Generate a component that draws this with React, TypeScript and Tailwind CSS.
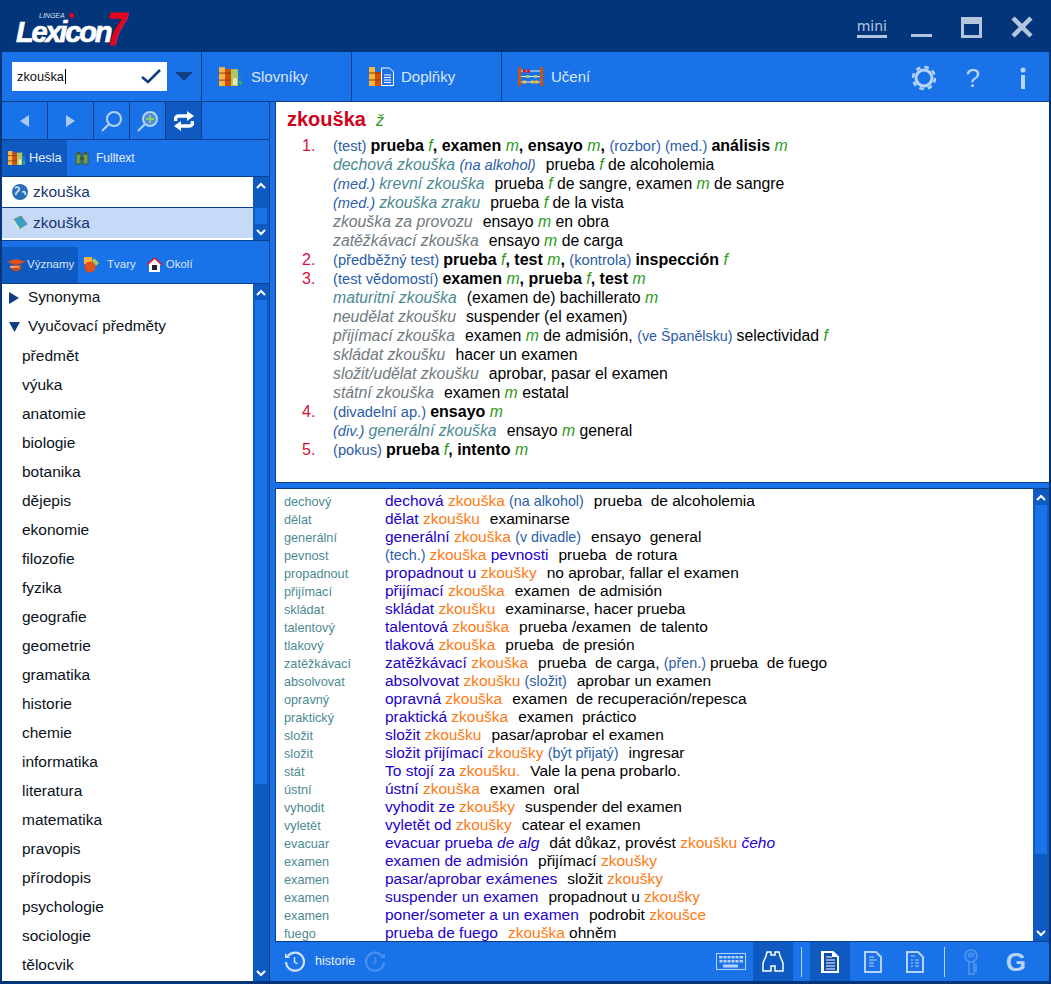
import React from "react";

const S: Record<string, string> = {
  p: "text-[#2a5da8] text-[14.7px]",
  q: "text-[#2a5da8] text-[14.3px]",
  pi: "text-[#2a5da8] text-[14.6px] italic",
  t: "text-black",
  T: "text-black ml-[10px]",
  b: "text-black font-bold text-[16px]",
  g: "text-[#2e9a18] italic",
  e: "text-[#4b8a92] italic",
  h: "text-[#6f7a80] italic",
  u: "text-[#2200cc]",
  o: "text-[#ff7a10]",
  i: "text-[#2200cc] italic",
};
type Seg = [string, string];

const dict: { n?: string; s: Seg[] }[] = [
  { n: "1.", s: [["p", "(test) "], ["b", "prueba "], ["g", "f"], ["b", ", examen "], ["g", "m"], ["b", ", ensayo "], ["g", "m"], ["b", ", "], ["p", "(rozbor) (med.) "], ["b", "análisis "], ["g", "m"]] },
  { s: [["e", "dechová zkouška "], ["pi", "(na alkohol)"], ["T", "prueba "], ["g", "f"], ["t", " de alcoholemia"]] },
  { s: [["pi", "(med.) "], ["e", "krevní zkouška"], ["T", "prueba "], ["g", "f"], ["t", " de sangre, examen "], ["g", "m"], ["t", " de sangre"]] },
  { s: [["pi", "(med.) "], ["e", "zkouška zraku"], ["T", "prueba "], ["g", "f"], ["t", " de la vista"]] },
  { s: [["h", "zkouška za provozu"], ["T", "ensayo "], ["g", "m"], ["t", " en obra"]] },
  { s: [["h", "zatěžkávací zkouška"], ["T", "ensayo "], ["g", "m"], ["t", " de carga"]] },
  { n: "2.", s: [["p", "(předběžný test) "], ["b", "prueba "], ["g", "f"], ["b", ", test "], ["g", "m"], ["b", ", "], ["p", "(kontrola) "], ["b", "inspección "], ["g", "f"]] },
  { n: "3.", s: [["p", "(test vědomostí) "], ["b", "examen "], ["g", "m"], ["b", ", prueba "], ["g", "f"], ["b", ", test "], ["g", "m"]] },
  { s: [["e", "maturitní zkouška"], ["T", "(examen de) bachillerato "], ["g", "m"]] },
  { s: [["h", "neudělat zkoušku"], ["T", "suspender (el examen)"]] },
  { s: [["h", "přijímací zkouška"], ["T", "examen "], ["g", "m"], ["t", " de admisión, "], ["q", "(ve Španělsku) "], ["t", "selectividad "], ["g", "f"]] },
  { s: [["h", "skládat zkoušku"], ["T", "hacer un examen"]] },
  { s: [["h", "složit/udělat zkoušku"], ["T", "aprobar, pasar el examen"]] },
  { s: [["h", "státní zkouška"], ["T", "examen "], ["g", "m"], ["t", " estatal"]] },
  { n: "4.", s: [["p", "(divadelní ap.) "], ["b", "ensayo "], ["g", "m"]] },
  { s: [["pi", "(div.) "], ["e", "generální zkouška"], ["T", "ensayo "], ["g", "m"], ["t", " general"]] },
  { n: "5.", s: [["p", "(pokus) "], ["b", "prueba "], ["g", "f"], ["b", ", intento "], ["g", "m"]] },
];

const rows: [string, Seg[]][] = [
  ["dechový", [["u", "dechová "], ["o", "zkouška "], ["q", "(na alkohol)"], ["T", "prueba  de alcoholemia"]]],
  ["dělat", [["u", "dělat "], ["o", "zkoušku"], ["T", "examinarse"]]],
  ["generální", [["u", "generální "], ["o", "zkouška "], ["q", "(v divadle)"], ["T", "ensayo  general"]]],
  ["pevnost", [["q", "(tech.) "], ["o", "zkouška "], ["u", "pevnosti"], ["T", "prueba  de rotura"]]],
  ["propadnout", [["u", "propadnout u "], ["o", "zkoušky"], ["T", "no aprobar, fallar el examen"]]],
  ["přijímací", [["u", "přijímací "], ["o", "zkouška"], ["T", "examen  de admisión"]]],
  ["skládat", [["u", "skládat "], ["o", "zkoušku"], ["T", "examinarse, hacer prueba"]]],
  ["talentový", [["u", "talentová "], ["o", "zkouška"], ["T", "prueba /examen  de talento"]]],
  ["tlakový", [["u", "tlaková "], ["o", "zkouška"], ["T", "prueba  de presión"]]],
  ["zatěžkávací", [["u", "zatěžkávací "], ["o", "zkouška"], ["T", "prueba  de carga, "], ["q", "(přen.) "], ["t", "prueba  de fuego"]]],
  ["absolvovat", [["u", "absolvovat "], ["o", "zkoušku "], ["q", "(složit)"], ["T", "aprobar un examen"]]],
  ["opravný", [["u", "opravná "], ["o", "zkouška"], ["T", "examen  de recuperación/repesca"]]],
  ["praktický", [["u", "praktická "], ["o", "zkouška"], ["T", "examen  práctico"]]],
  ["složit", [["u", "složit "], ["o", "zkoušku"], ["T", "pasar/aprobar el examen"]]],
  ["složit", [["u", "složit přijímací "], ["o", "zkoušky "], ["q", "(být přijatý)"], ["T", "ingresar"]]],
  ["stát", [["u", "To stojí za "], ["o", "zkoušku."], ["T", "Vale la pena probarlo."]]],
  ["ústní", [["u", "ústní "], ["o", "zkouška"], ["T", "examen  oral"]]],
  ["vyhodit", [["u", "vyhodit ze "], ["o", "zkoušky"], ["T", "suspender del examen"]]],
  ["vyletět", [["u", "vyletět od "], ["o", "zkoušky"], ["T", "catear el examen"]]],
  ["evacuar", [["u", "evacuar prueba "], ["i", "de alg"], ["T", "dát důkaz, provést "], ["o", "zkoušku "], ["i", "čeho"]]],
  ["examen", [["u", "examen de admisión"], ["T", "přijímací "], ["o", "zkoušky"]]],
  ["examen", [["u", "pasar/aprobar exámenes"], ["T", "složit "], ["o", "zkoušky"]]],
  ["examen", [["u", "suspender un examen"], ["T", "propadnout u "], ["o", "zkoušky"]]],
  ["examen", [["u", "poner/someter a un examen"], ["T", "podrobit "], ["o", "zkoušce"]]],
  ["fuego", [["u", "prueba de fuego"], ["T", ""], ["o", "zkouška "], ["t", "ohněm"]]],
];

const subjects = ["předmět", "výuka", "anatomie", "biologie", "botanika", "dějepis", "ekonomie", "filozofie", "fyzika", "geografie", "geometrie", "gramatika", "historie", "chemie", "informatika", "literatura", "matematika", "pravopis", "přírodopis", "psychologie", "sociologie", "tělocvik"];

const Segs = ({ s }: { s: Seg[] }) => (
  <>
    {s.map(([k, t], i) => (
      <span key={i} className={`${S[k]} whitespace-pre`}>{t}</span>
    ))}
  </>
);

const Books = ({ w = 24 }: { w?: number }) => (
  <svg width={w} height={w * 0.8} viewBox="0 0 24 19" className="shrink-0">
    <rect x="0" y="0" width="6" height="19" fill="#ffb340" />
    <rect x="6" y="2" width="6" height="17" fill="#d0500c" />
    <path d="M0 6h12M0 13h12" stroke="#8a3a08" strokeWidth="1" />
    <rect x="12" y="2" width="7" height="17" fill="#a8c860" />
    <rect x="14" y="11" width="4" height="7" fill="#e0e8b8" />
    <rect x="20" y="7" width="3" height="12" fill="#1f7ad0" />
    <rect x="20" y="14" width="3" height="3" fill="#30b060" />
  </svg>
);

const Chevron = ({ up }: { up?: boolean }) => (
  <svg width="10" height="7" viewBox="0 0 10 7">
    <path d={up ? "M1 6l4-4 4 4" : "M1 1l4 4 4-4"} fill="none" stroke="#fff" strokeWidth="2" />
  </svg>
);

const Scroll = ({ thumbTop, thumbH }: { thumbTop: number; thumbH: number }) => (
  <div className="w-4 shrink-0 bg-[#0f5ac0] flex flex-col items-center">
    <div className="h-4 shrink-0 flex items-center justify-center"><Chevron up /></div>
    <div className="flex-1 w-3 flex flex-col">
      <div className="w-3 shrink-0" style={{ height: thumbTop }} />
      <div className="w-3 shrink-0 bg-[#1a72e8]" style={{ height: thumbH }} />
    </div>
    <div className="h-4 shrink-0 flex items-center justify-center"><Chevron /></div>
  </div>
);

const Tri = ({ dir }: { dir: "l" | "r" }) => (
  <svg width="9" height="12" viewBox="0 0 9 12">
    <path d={dir === "l" ? "M9 0v12L0 6z" : "M0 0v12l9-6z"} fill="#a9c8f4" />
  </svg>
);

const Lens = ({ plus }: { plus?: boolean }) => (
  <svg width="22" height="22" viewBox="0 0 22 22" fill="none">
    <circle cx="13" cy="9" r="7" stroke="#b5d2f8" strokeWidth="2" fill={plus ? "#4f8fd8" : "none"} />
    <path d="M8 14l-7 7" stroke="#b5d2f8" strokeWidth="2" />
    {plus && <path d="M13 5v8M9 9h8" stroke="#8ecb6a" strokeWidth="2" />}
  </svg>
);

const Binoc = ({ w = 14 }: { w?: number }) => (
  <svg width={w} height={w} viewBox="0 0 14 14">
    <rect x="1" y="3" width="5" height="10" fill="#6f9a50" stroke="#3a5a3a" />
    <rect x="8" y="3" width="5" height="10" fill="#6f9a50" stroke="#3a5a3a" />
    <rect x="5" y="6" width="4" height="3" fill="#3a5a3a" />
    <rect x="2" y="1" width="3" height="2" fill="#3a5a3a" />
    <rect x="9" y="1" width="3" height="2" fill="#3a5a3a" />
  </svg>
);

const DocIcon = ({ fill, line, dots }: { fill?: boolean; line: string; dots?: boolean }) => (
  <svg width="18" height="22" viewBox="0 0 18 22">
    <path d="M1 1h11l5 5v15H1z" fill={fill ? "#fff" : "#1a72e8"} stroke={fill ? "#fff" : "#b5d2f8"} strokeWidth="2" />
    {fill ? <path d="M3 2h8v4h5v14H3z" fill="#0f4fa8" /> : null}
    {dots ? (
      <path d="M5 5h4M5 9h2M9 9h4M5 12h2M9 12h4M5 15h2M9 15h4" stroke={line} strokeWidth="1" />
    ) : fill ? (
      <path d="M5 6h6M5 9h9M5 12h9M5 15h9M5 18h9" stroke={line} strokeWidth="1" />
    ) : (
      <path d="M5 6h5M5 9h8M5 12h5M5 15h5" stroke={line} strokeWidth="1" />
    )}
  </svg>
);

export default function App() {
  return (
    <div className="w-[1051px] h-[984px] overflow-hidden bg-[#03357a] flex flex-col font-['Liberation_Sans',Arial,sans-serif]">
      {/* title bar */}
      <div className="h-[52px] shrink-0 flex items-start pl-4">
        <div className="flex items-start mt-[12px]">
          <div className="flex flex-col w-[91px] text-white">
            <div className="flex items-center h-[7px] pl-[23px] gap-[4px]">
              <span className="text-[7px] italic leading-[7px] text-[#d4e0f0]">LINGEA</span>
              <span className="w-[5px] h-[5px] rounded-full bg-[#e30520]" />
            </div>
            <span className="text-[29px] leading-[27px] font-bold italic tracking-[-2.2px] whitespace-nowrap [-webkit-text-stroke:0.7px_white]">Lexicon</span>
          </div>
          <span className="text-[47px] leading-[34px] h-[34px] font-bold italic text-[#e30520] scale-x-[0.75] origin-left [-webkit-text-stroke:0.8px_#e30520]">7</span>
        </div>
        <div className="ml-auto flex items-start">
          <span className="mt-[18px] text-[14px] leading-[17px] font-['DejaVu_Sans',sans-serif] text-[#b4c6dd] border-b-[3px] border-[#b4c6dd] mr-[24px]">mini</span>
          <div className="w-[21px] h-[3px] bg-[#b4c6dd] mt-[34px] mr-[29px]" />
          <div className="w-[21px] h-[21px] border-[3px] border-t-[7px] border-[#b4c6dd] mt-[17px] mr-[29px]" />
          <svg width="22" height="22" viewBox="0 0 22 22" className="mt-[16px] mr-[18px]">
            <path d="M2 2l18 18M20 2L2 20" stroke="#b4c6dd" strokeWidth="4.5" />
          </svg>
        </div>
      </div>

      {/* body */}
      <div className="h-[929px] shrink-0 mx-[2px] bg-[#1a72e8] flex flex-col">
        {/* toolbar */}
        <div className="h-[50px] shrink-0 flex border-b border-[#0a3f8c] text-[15px] text-[#dbe8fb]">
          <div className="w-[200px] shrink-0 flex items-center pl-[10px] border-r border-[#0a3f8c]">
            <div className="w-[155px] h-[29px] bg-white flex items-center pl-[5px] pr-[6px] justify-between">
              <span className="text-[12.8px] text-[#111] border-r border-black leading-[15px] pr-[1px]">zkouška</span>
              <svg width="20" height="15" viewBox="0 0 20 15"><path d="M1 8l6 5L19 1" fill="none" stroke="#0f3f80" strokeWidth="2.6" /></svg>
            </div>
            <svg width="18" height="9" viewBox="0 0 18 9" className="ml-2"><path d="M0 0h18L9 9z" fill="#0f3f80" /></svg>
          </div>
          <div className="w-[150px] shrink-0 flex items-center pl-[17px] gap-[8px] border-r border-[#0a3f8c]">
            <Books />
            <span className="pt-[2px]">Slovníky</span>
          </div>
          <div className="w-[150px] shrink-0 flex items-center pl-[17px] gap-[7px] border-r border-[#0a3f8c]">
            <svg width="25" height="19" viewBox="0 0 25 19">
              <rect width="6" height="19" fill="#ffb340" />
              <rect x="6" y="5" width="6" height="14" fill="#d0500c" />
              <path d="M0 6h12M0 13h12" stroke="#8a3a08" />
              <path d="M12.500 1h8l4 4v13.500h-12z" fill="#1a72e8" stroke="#fff" />
              <path d="M15 8h7M15 10.500h7M15 13h7M15 15.500h7" stroke="#fff" />
            </svg>
            <span className="pt-[2px]">Doplňky</span>
          </div>
          <div className="flex items-center pl-[16px] gap-[8px]">
            <svg width="25" height="19" viewBox="0 0 25 19">
              <rect width="3" height="19" fill="#c9560f" />
              <rect x="22" width="3" height="19" fill="#c9560f" />
              <path d="M3 4h19M3 9.500h19M3 15h19" stroke="#e8f0fb" />
              <rect x="5" y="2.500" width="3" height="3" fill="#e01020" />
              <rect x="9" y="2.500" width="3" height="3" fill="#e01020" />
              <rect x="8" y="8" width="3" height="3" fill="#a8c860" />
              <rect x="16" y="8" width="3" height="3" fill="#a8c860" />
              <rect x="5" y="13.500" width="3" height="3" fill="#f2c020" />
              <rect x="13" y="13.500" width="3" height="3" fill="#f2c020" />
              <rect x="17" y="13.500" width="3" height="3" fill="#f2c020" />
            </svg>
            <span className="pt-[2px]">Učení</span>
          </div>
          <div className="ml-auto flex items-center pr-[23px] pt-[2px]">
            <svg width="26" height="26" viewBox="0 0 26 26" className="mr-[29px]">
              <circle cx="13" cy="13" r="8" fill="none" stroke="#b8d4fb" strokeWidth="3" />
              <circle cx="13" cy="13" r="11" fill="none" stroke="#b8d4fb" strokeWidth="2.500" strokeDasharray="4.640 4" />
            </svg>
            <span className="text-[26px] text-[#b8d4fb] leading-none mr-[40px]">?</span>
            <svg width="6" height="22" viewBox="0 0 6 22"><circle cx="3" cy="3" r="2.500" fill="#b8d4fb" /><rect x="1" y="8" width="4" height="14" fill="#b8d4fb" /></svg>
          </div>
        </div>

        <div className="flex-1 flex min-h-0">
          {/* left column */}
          <div className="w-[268px] shrink-0 flex flex-col border-r border-[#0a3f8c]">
            <div className="h-[38px] shrink-0 flex border-b border-[#0a3f8c]">
              <div className="w-[46px] flex items-center justify-center border-r border-[#0a3f8c]"><Tri dir="l" /></div>
              <div className="w-[46px] flex items-center justify-center border-r border-[#0a3f8c]"><Tri dir="r" /></div>
              <div className="w-[36px] flex items-center justify-center border-r border-[#0a3f8c]"><Lens /></div>
              <div className="w-[36px] flex items-center justify-center border-r border-[#0a3f8c]"><Lens plus /></div>
              <div className="w-[36px] flex items-center justify-center border-r border-[#0a3f8c] bg-[#0f5ac0]">
                <svg width="20" height="20" viewBox="0 0 20 20" fill="none" stroke="#fff" strokeWidth="3.500">
                  <path d="M1.500 10V8a3 3 0 0 1 3-3h10M18.500 10v2a3 3 0 0 1-3 3H5" />
                  <path d="M13 0l7 5-7 5zM7 10l-7 5 7 5z" fill="#fff" stroke="none" />
                </svg>
              </div>
            </div>
            <div className="h-[37px] shrink-0 flex border-b border-[#0a3f8c] text-[12px] text-[#e6effc]">
              <div className="w-[65px] flex items-center pl-[6px] gap-[3px] bg-[#0f5ac0]"><Books w={18} /><span className="text-[12.8px]">Hesla</span></div>
              <div className="flex items-center pl-[8px] gap-[7px]"><Binoc /><span>Fulltext</span></div>
            </div>
            <div className="h-[64px] shrink-0 flex border-b border-[#0a3f8c]">
              <div className="flex-1 bg-white flex flex-col text-[15.5px] text-[#17346f]">
                <div className="h-[31px] flex items-center pl-[10px] gap-[5px] border-b border-[#0a3f8c]">
                  <svg width="16" height="16" viewBox="0 0 16 16"><circle cx="8" cy="8" r="8" fill="#2a6fb8" /><path d="M3 4c3-2 5 0 4 2S3 8 4 11M10 8c3-1 4 1 3 3" fill="none" stroke="#cfe0f2" strokeWidth="1.800" /></svg>
                  <span>zkouška</span>
                </div>
                <div className="h-[30px] bg-[#c6daf8] flex items-center pl-[10px] gap-[5px]">
                  <svg width="16" height="16" viewBox="0 0 16 16"><path d="M1 5l8-4 6 8-8 5z" fill="#3aa0c8" stroke="#6a8a80" /><path d="M1 5l6 9" stroke="#dfe8d0" strokeWidth="2" /></svg>
                  <span>zkouška</span>
                </div>
              </div>
              <Scroll thumbTop={15} thumbH={16} />
            </div>
            <div className="h-[6px] shrink-0" />
            <div className="h-[37px] shrink-0 flex border-b border-[#0a3f8c] text-[11.5px] text-[#dbe8fb]">
              <div className="w-[76px] flex items-center pl-[5px] gap-[1px] bg-[#0f5ac0]">
                <svg width="19" height="14" viewBox="0 0 19 14"><path d="M0 4l9-3 10 3-10 3z" fill="#e0501a" /><path d="M4 7h10v4c-3 3-7 3-10 0z" fill="#d04a10" /><path d="M3 9h9" stroke="#fff" /></svg>
                <span>Významy</span>
              </div>
              <div className="flex items-center pl-[6px] gap-[7px]">
                <svg width="16" height="16" viewBox="0 0 16 16"><rect x="0" y="0" width="8" height="7" fill="#ffb340" /><path d="M10 1l5 5-3 3-4-5z" fill="#a8c860" /><circle cx="6" cy="10" r="5.500" fill="#e0501a" /></svg>
                <span>Tvary</span>
              </div>
              <div className="flex items-center pl-[11px] gap-[4px]">
                <svg width="15" height="14" viewBox="0 0 15 14"><path d="M7.500 0L15 7h-2v7H2V7H0z" fill="#fff" /><path d="M0 7l7.500-7L15 7" fill="none" stroke="#e01020" strokeWidth="1.500" /><rect x="5" y="7" width="5" height="5" fill="#223" /></svg>
                <span>Okolí</span>
              </div>
            </div>
            <div className="flex-1 flex min-h-0">
              <div className="flex-1 bg-white text-[15.5px] text-[#0b1220] overflow-hidden">
                <div className="h-[29px] flex items-center pl-[7px] gap-[9px] pb-[2px]">
                  <svg width="10" height="12" viewBox="0 0 10 12"><path d="M0 0v12l10-6z" fill="#0f3f80" /></svg>
                  <span className="text-[15.3px]">Synonyma</span>
                </div>
                <div className="h-[29px] flex items-center pl-[7px] gap-[8px] pb-[2px]">
                  <svg width="11" height="10" viewBox="0 0 11 10"><path d="M0 0h11L5.500 10z" fill="#0f3f80" /></svg>
                  <span className="text-[15.3px]">Vyučovací předměty</span>
                </div>
                {subjects.map((x) => (
                  <div key={x} className="h-[29px] flex items-center pl-[20px] pb-[2px]">{x}</div>
                ))}
              </div>
              <Scroll thumbTop={0} thumbH={484} />
            </div>
          </div>

          {/* right column */}
          <div className="flex-1 min-w-0 flex flex-col pl-[5px]">
            <div className="h-[381px] shrink-0 bg-white border-l border-b border-[#0a3f8c] pl-[11px] pt-[5px] text-[15.8px] leading-[19px]">
              <div className="h-[24px] flex items-baseline">
                <span className="text-[20px] leading-[24px] font-bold text-[#d0001c]">zkouška</span>
                <span className="ml-[10px] text-[16px] italic text-[#2e9a18]">ž</span>
              </div>
              <div className="pt-[5px]">
                {dict.map((d, i) => (
                  <div key={i} className="h-[19px] flex whitespace-nowrap">
                    <span className="w-[46px] pl-[15px] shrink-0 text-[#d0103a] text-[16px]">{d.n}</span>
                    <span><Segs s={d.s} /></span>
                  </div>
                ))}
              </div>
            </div>
            <div className="h-[5px] shrink-0" />
            <div className="h-[454px] shrink-0 flex border-l border-t border-b border-[#0a3f8c]">
              <div className="flex-1 bg-white pt-[3px] overflow-hidden text-[15.5px] leading-[18px]">
                {rows.map(([k, s], i) => (
                  <div key={i} className="h-[18px] flex whitespace-nowrap">
                    <span className="w-[109px] pl-[8px] pt-[1px] shrink-0 text-[12.7px] text-[#4b8a92]">{k}</span>
                    <span><Segs s={s} /></span>
                  </div>
                ))}
              </div>
              <Scroll thumbTop={0} thumbH={349} />
            </div>
            <div className="flex-1 flex items-center pl-[9px]">
              <svg width="21" height="21" viewBox="0 0 21 21" fill="none" stroke="#cfe0f8" strokeWidth="2.200">
                <path d="M4 5a9 9 0 1 1-2 6" /><path d="M1 2v5h5" fill="#cfe0f8" stroke="none" /><path d="M10.500 6v5l3 2" strokeWidth="1.500" />
              </svg>
              <span className="text-[12.5px] text-[#e6effc] ml-[10px]">historie</span>
              <svg width="21" height="21" viewBox="0 0 21 21" fill="none" stroke="#4a8fee" strokeWidth="2.200" className="ml-[10px]">
                <path d="M17 5a9 9 0 1 0 2 6" /><path d="M20 2v5h-5" fill="#4a8fee" stroke="none" /><path d="M10.500 6v5l-3 2" strokeWidth="1.500" />
              </svg>
              <div className="ml-auto flex items-center h-full">
                <svg width="30" height="17" viewBox="0 0 30 17" className="mr-[7px]">
                  <rect x=".5" y=".5" width="29" height="16" fill="none" stroke="#b5d2f8" />
                  <path d="M3 3h24v2.500H3zM3 7h24v2.500H3z" fill="#b5d2f8" />
                  <path d="M3 5v5M7 3v7M11 3v7M15 3v7M19 3v7M23 3v7" stroke="#1a72e8" />
                  <rect x="7" y="11.500" width="15" height="3" fill="#b5d2f8" />
                </svg>
                <div className="w-[40px] h-full bg-[#0f5ac0] flex items-center justify-center">
                  <svg width="24" height="24" viewBox="0 0 24 24" fill="none" stroke="#fff" strokeWidth="1.500"><path d="M6 2h4v3h4V2h4l1 4 3 7v8h-8v-5h-4v5H2v-8l3-7z" /></svg>
                </div>
                <div className="w-px h-[30px] bg-[#b5d2f8] ml-[8px] mr-[8px]" />
                <div className="w-[40px] h-full bg-[#0f5ac0] flex items-center justify-center"><DocIcon fill line="#fff" /></div>
                <div className="w-[44px] ml-[1px] h-full flex items-center justify-center"><DocIcon line="#b5d2f8" /></div>
                <div className="w-[40px] h-full flex items-center justify-center"><DocIcon dots line="#b5d2f8" /></div>
                <div className="w-px h-[30px] bg-[#b5d2f8] ml-[9px] mr-[18px]" />
                <svg width="16" height="26" viewBox="0 0 16 26" fill="none" stroke="#4a8fee" strokeWidth="2"><circle cx="8" cy="7" r="6" /><ellipse cx="8" cy="6" rx="2.500" ry="1.500" /><path d="M6 13v12h5v-3h2v-2h-2v-2h2v-2h-2v-3" /></svg>
                <span className="text-[26px] font-bold leading-none text-[#b5d2f8] ml-[27px] mr-[23px]">G</span>
              </div>
            </div>
          </div>
        </div>
      </div>
    </div>
  );
}
